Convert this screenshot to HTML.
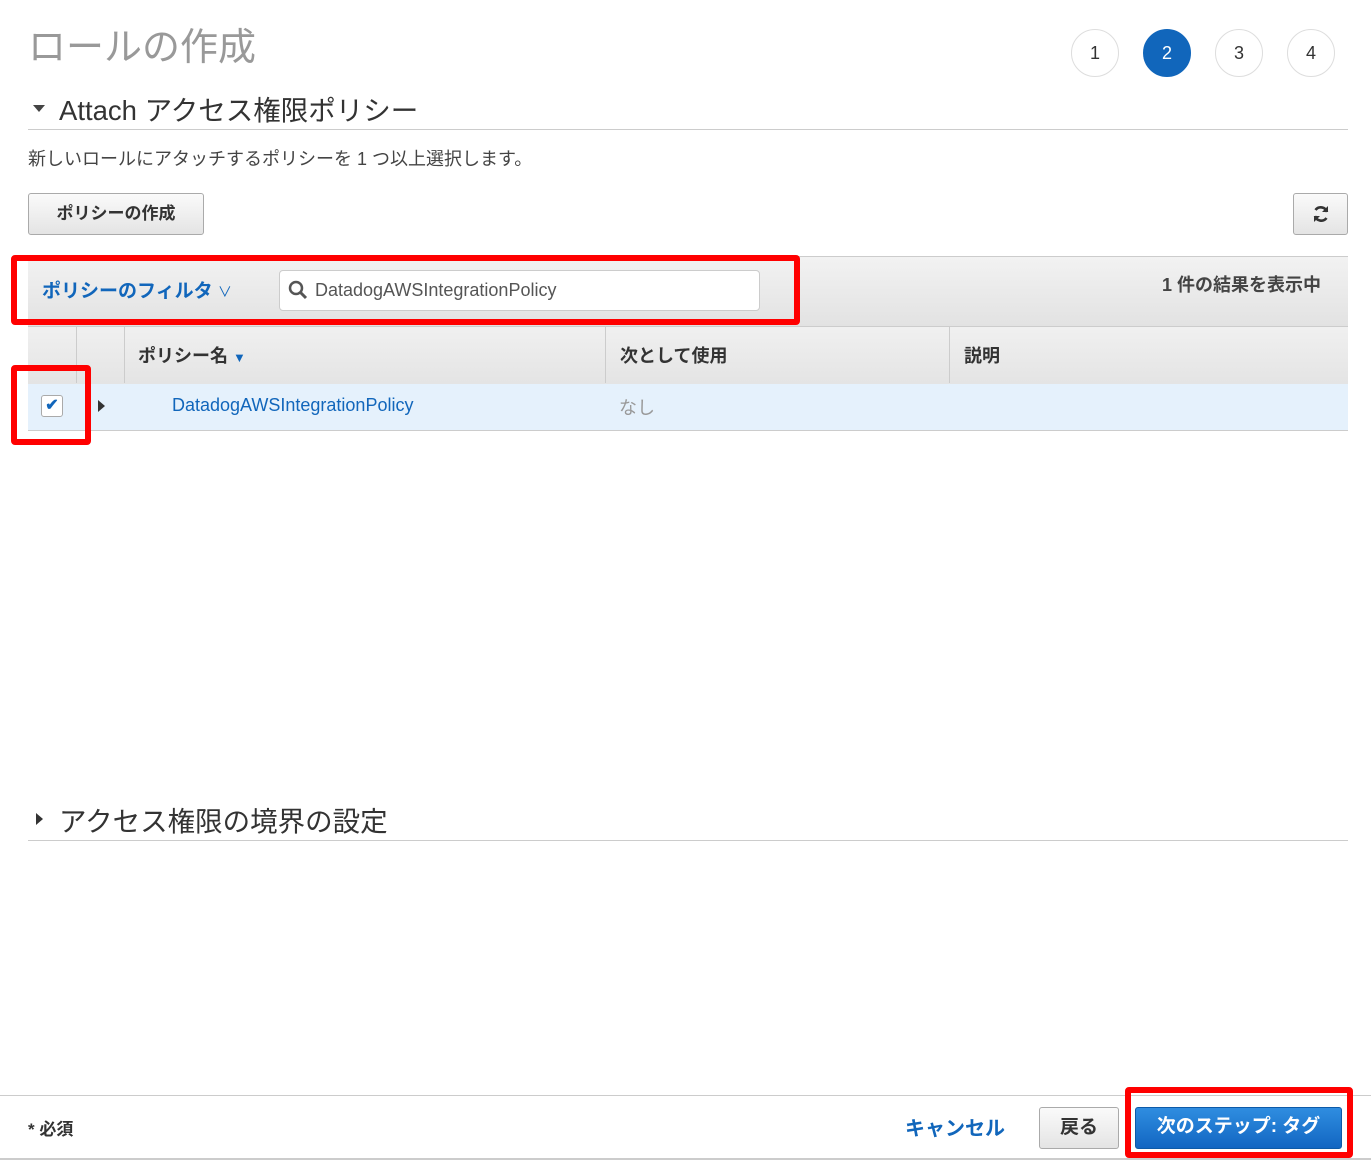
<!DOCTYPE html><html><head><meta charset="utf-8"><style>
body{margin:0;width:1371px;height:1160px;background:#fff;font-family:"Liberation Sans","Noto Sans CJK JP",sans-serif;position:relative;overflow:hidden;color:#444}
.a{position:absolute}
.circ{position:absolute;top:29px;width:48px;height:48px;border-radius:50%;border:1px solid #ddd;box-sizing:border-box;text-align:center;line-height:46px;font-size:18px;color:#333}
.btn{position:absolute;border:1px solid #aaa;border-radius:3px;background:linear-gradient(#fafafa,#e4e4e4);box-sizing:border-box;text-align:center;font-weight:bold;color:#333}
.red{position:absolute;border:6px solid #f00;border-radius:4px;box-sizing:border-box}
</style></head><body>
<div class="a" style="left:28px;top:16px;font-size:38px;color:#999">ロールの作成</div>
<div class="circ" style="left:1071px">1</div>
<div class="circ" style="left:1143px;background:#1166bb;border-color:#1166bb;color:#fff">2</div>
<div class="circ" style="left:1215px">3</div>
<div class="circ" style="left:1287px">4</div>
<div class="a" style="left:33px;top:105px;width:0;height:0;border-left:6px solid transparent;border-right:6px solid transparent;border-top:7px solid #444"></div>
<div class="a" style="left:59px;top:88px;font-size:27.5px;color:#333">Attach アクセス権限ポリシー</div>
<div class="a" style="left:28px;top:129px;width:1320px;height:1px;background:#ccc"></div>
<div class="a" style="left:28px;top:145px;font-size:18px;color:#444">新しいロールにアタッチするポリシーを 1 つ以上選択します。</div>
<div class="btn" style="left:28px;top:193px;width:176px;height:42px;line-height:40px;font-size:17px">ポリシーの作成</div>
<div class="btn" style="left:1293px;top:193px;width:55px;height:42px"><svg style="margin-top:10px" width="20" height="20" viewBox="0 0 20 20"><path d="M16 8A6.5 6.5 0 0 0 4.5 6" fill="none" stroke="#333" stroke-width="2.6"/><path d="M17 2v6h-6z" fill="#333"/><path d="M4 12a6.5 6.5 0 0 0 11.5 2" fill="none" stroke="#333" stroke-width="2.6"/><path d="M3 18v-6h6z" fill="#333"/></svg></div>
<div class="a" style="left:28px;top:256px;width:1320px;height:70px;background:linear-gradient(#f2f2f2,#e2e2e2);border-top:1px solid #ccc"></div>
<div class="a" style="left:42px;top:276px;font-size:19px;font-weight:bold;color:#1166bb">ポリシーのフィルタ <span style="font-weight:normal;font-size:14px">∨</span></div>
<div class="a" style="left:279px;top:270px;width:481px;height:41px;background:#fff;border:1px solid #ccc;border-radius:4px;box-sizing:border-box"></div>
<svg class="a" style="left:288px;top:280px" width="20" height="20"><circle cx="8" cy="8" r="6" fill="none" stroke="#555" stroke-width="2.5"/><line x1="12" y1="12" x2="18" y2="18" stroke="#555" stroke-width="3"/></svg>
<div class="a" style="left:315px;top:280px;font-size:18px;color:#555">DatadogAWSIntegrationPolicy</div>
<div class="a" style="left:1162px;top:271px;font-size:18px;font-weight:bold;color:#444">1 件の結果を表示中</div>
<div class="a" style="left:28px;top:326px;width:1320px;height:57px;background:linear-gradient(#f0f0f0,#e4e4e4);border-top:1px solid #ccc;border-bottom:1px solid #ccc"></div>
<div class="a" style="left:76px;top:327px;width:1px;height:56px;background:#ccc"></div>
<div class="a" style="left:124px;top:327px;width:1px;height:56px;background:#ccc"></div>
<div class="a" style="left:605px;top:327px;width:1px;height:56px;background:#ccc"></div>
<div class="a" style="left:949px;top:327px;width:1px;height:56px;background:#ccc"></div>
<div class="a" style="left:138px;top:342px;font-size:18px;font-weight:bold;color:#333">ポリシー名 <span style="color:#1166bb;font-size:13px">▼</span></div>
<div class="a" style="left:620px;top:342px;font-size:18px;font-weight:bold;color:#333">次として使用</div>
<div class="a" style="left:964px;top:342px;font-size:18px;font-weight:bold;color:#333">説明</div>
<div class="a" style="left:28px;top:384px;width:1320px;height:46px;background:#e5f1fc;border-bottom:1px solid #ccc"></div>
<div class="a" style="left:41px;top:395px;width:22px;height:22px;background:#fff;border:1px solid #aaa;border-radius:3px;box-sizing:border-box;text-align:center;line-height:20px;color:#1166bb;font-size:16px;font-weight:bold">✔</div>
<div class="a" style="left:98px;top:400px;width:0;height:0;border-top:6px solid transparent;border-bottom:6px solid transparent;border-left:7px solid #333"></div>
<div class="a" style="left:172px;top:395px;font-size:18px;color:#1166bb">DatadogAWSIntegrationPolicy</div>
<div class="a" style="left:619px;top:394px;font-size:18px;color:#999">なし</div>
<div class="red" style="left:11px;top:255px;width:789px;height:70px"></div>
<div class="red" style="left:11px;top:365px;width:80px;height:80px"></div>
<div class="a" style="left:36px;top:813px;width:0;height:0;border-top:6px solid transparent;border-bottom:6px solid transparent;border-left:7px solid #333"></div>
<div class="a" style="left:59px;top:799px;font-size:27.5px;color:#333">アクセス権限の境界の設定</div>
<div class="a" style="left:28px;top:840px;width:1320px;height:1px;background:#ccc"></div>
<div class="a" style="left:0;top:1095px;width:1371px;height:1px;background:#ccc"></div>
<div class="a" style="left:0;top:1158px;width:1371px;height:2px;background:#ccc"></div>
<div class="a" style="left:28px;top:1115px;font-size:17px;font-weight:bold;color:#333">* 必須</div>
<div class="a" style="left:905px;top:1112px;font-size:20px;font-weight:bold;color:#1166bb">キャンセル</div>
<div class="btn" style="left:1039px;top:1107px;width:80px;height:42px;line-height:40px;font-size:19px">戻る</div>
<div class="a" style="left:1135px;top:1107px;width:207px;height:42px;border-radius:3px;background:linear-gradient(#2f8de0,#1266c2);border:1px solid #0d5aa8;box-sizing:border-box;text-align:center;line-height:38px;font-size:19px;font-weight:bold;color:#fff">次のステップ: タグ</div>
<div class="red" style="left:1125px;top:1087px;width:228px;height:71px"></div>
</body></html>
